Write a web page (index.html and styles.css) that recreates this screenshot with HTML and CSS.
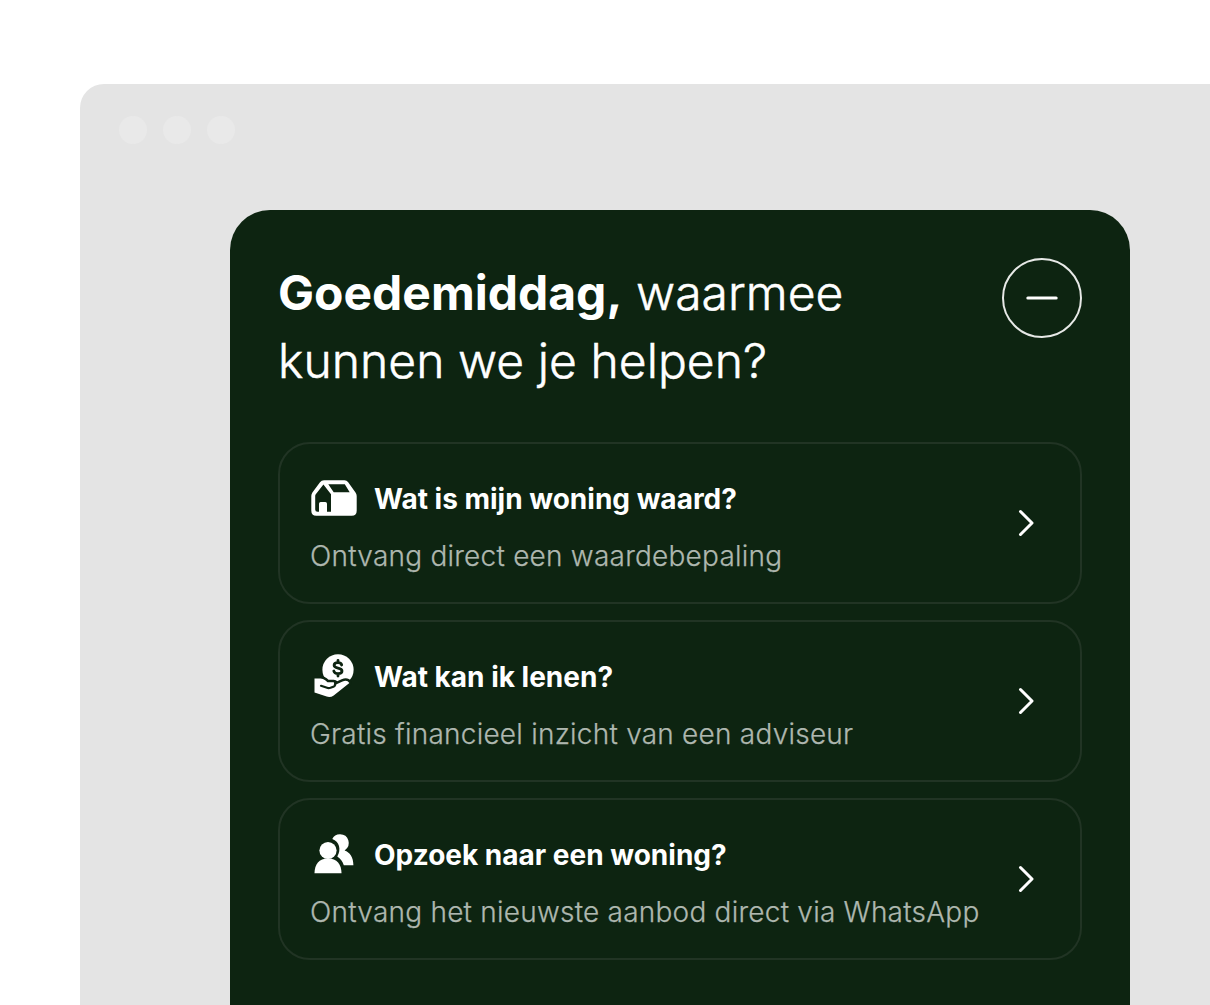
FILE: index.html
```html
<!DOCTYPE html>
<html lang="nl">

<head>
    <meta charset="UTF-8">
    <meta name="viewport" content="width=device-width, initial-scale=1.0">
    <title>Goedemiddag</title>
    <link rel="stylesheet" href="styles.css">
</head>

<body>
    <div class="browser">
        <div class="browser-dots">
            <span></span>
            <span></span>
            <span></span>
        </div>

        <div class="widget">
            <div class="widget-header">
                <h1 class="widget-title"><strong>Goedemiddag,</strong> waarmee<br>kunnen we je helpen?</h1>
                <button type="button" class="minimize-button" aria-label="Minimaliseren">
                    <svg width="32" height="4" viewBox="0 0 32 4">
                        <path d="M1.8 2h28.4" stroke="#fff" stroke-width="3" stroke-linecap="round" />
                    </svg>
                </button>
            </div>

            <div class="options">
                <!-- Waardebepaling -->
                <a class="option" href="#">
                    <div class="option-text">
                        <div class="option-heading">
                            <svg class="option-icon" viewBox="0 0 48 48">
                                <path fill="#fff" fill-rule="evenodd" d="M14 6.3H34.5Q36.7 6.3 38 8L45.5 18.5Q46.7 20 46.7 22V36.7Q46.7 41.7 41.7 41.7H6.3Q1.3 41.7 1.3 36.7V22Q1.3 20 2.4 18.4L10 8.3Q11.5 6.3 14 6.3ZM13.4 10.6L5.8 20.2Q5.2 21 5.2 22V35.5Q5.2 37.8 7.5 37.8H9V29.7Q9 28 10.7 28H15.3Q17 28 17 29.7V37.8H21V20.3ZM18.3 10.3L23.7 18.3H39.7L34.8 10.3Z" />
                            </svg>
                            <h2>Wat is mijn woning waard?</h2>
                        </div>
                        <p>Ontvang direct een waardebepaling</p>
                    </div>
                    <svg class="chevron" viewBox="0 0 16 28">
                        <path d="M2.5 2.5L14 14L2.5 25.5" />
                    </svg>
                </a>

                <!-- Hypotheek -->
                <a class="option" href="#">
                    <div class="option-text">
                        <div class="option-heading">
                            <svg class="option-icon" viewBox="0 0 48 48">
                                <circle cx="28" cy="17.8" r="15.6" fill="#fff" />
                                <path class="icon-line" d="M31.7 13C31.2 11.3 29.9 10.7 28 10.7C25.6 10.7 24.1 11.7 24.1 13.3C24.1 17.2 32 14.9 32 18.9C32 20.6 30.4 21.6 28 21.6C25.7 21.6 24.2 20.7 23.8 19M28 8.3V10.7M28 21.6V24" />
                                <path fill="#fff" stroke="#0d2411" stroke-width="5" paint-order="stroke" stroke-linejoin="round" d="M4.5 26.5H10.5Q13 26.5 15.2 28.3L17.5 30.2H23.5Q26 30.4 26 32.6L32.6 29.6Q37 27.6 39.4 31L23.7 43.4Q20.5 45.8 16.7 44.6L4.5 40.5Z" />
                                <path class="icon-line thin" d="M11 33.8L17.8 36Q19 36.3 20.5 35.8L24 34.4Q25.8 33.4 25 30" />
                            </svg>
                            <h2>Wat kan ik lenen?</h2>
                        </div>
                        <p>Gratis financieel inzicht van een adviseur</p>
                    </div>
                    <svg class="chevron" viewBox="0 0 16 28">
                        <path d="M2.5 2.5L14 14L2.5 25.5" />
                    </svg>
                </a>

                <!-- Woning zoeken -->
                <a class="option" href="#">
                    <div class="option-text">
                        <div class="option-heading">
                            <svg class="option-icon" viewBox="0 0 48 48">
                                <path fill="#fff" d="M22.3 9C23.5 6.2 26.4 4.3 30 4.3A8.7 8.7 0 0 1 34.6 20.4C39.8 22.2 43.4 27 43.4 35.3H33.8C32.6 31.5 30.5 28.6 27.3 26.5C31.5 19.5 29.3 11.5 22.3 9Z" />
                                <circle cx="18" cy="20.5" r="8.6" fill="#fff" />
                                <path fill="#fff" d="M4.5 43.3C4.5 34.5 9 28.5 18 28.5S31.5 34.5 31.5 43.3Z" />
                            </svg>
                            <h2>Opzoek naar een woning?</h2>
                        </div>
                        <p>Ontvang het nieuwste aanbod direct via WhatsApp</p>
                    </div>
                    <svg class="chevron" viewBox="0 0 16 28">
                        <path d="M2.5 2.5L14 14L2.5 25.5" />
                    </svg>
                </a>
            </div>
        </div>
    </div>
</body>

</html>
```
FILE: styles.css
```css
* {
    box-sizing: border-box;
}

body {
    font-family: Inter, "Liberation Sans", sans-serif;
    margin: 0;
    padding: 84px 0 0 80px;
    height: 1005px;
    background-color: #fff;
    overflow: hidden;
}

h1,
h2,
p {
    margin: 0;
}

.browser {
    height: 921px;
    padding: 32px 80px 0 39px;
    background-color: #e4e4e4;
    border-top-left-radius: 24px;
}

.browser-dots {
    display: flex;
    gap: 16px;
}

.browser-dots span {
    width: 28px;
    height: 28px;
    border-radius: 50%;
    background-color: #e9e9e9;
}

/* Widget */
.widget {
    width: 900px;
    height: 795px;
    margin: 66px 0 0 111px;
    padding: 48px 48px 0;
    background-color: #0d2411;
    border-radius: 40px 40px 0 0;
    color: #fff;
}

.widget-header {
    display: flex;
    justify-content: space-between;
    align-items: flex-start;
    height: 184px;
}

.widget-title {
    padding-top: 1px;
    font-size: 48px;
    font-weight: 300;
    line-height: 68px;
    letter-spacing: 0.05px;
    -webkit-text-stroke: 0.5px #fff;
}

.widget-title strong {
    font-weight: 700;
    letter-spacing: 0;
    -webkit-text-stroke: 0;
}

.minimize-button {
    display: flex;
    align-items: center;
    justify-content: center;
    width: 80px;
    height: 80px;
    padding: 0;
    background: none;
    border: 2px solid #e7e9e7;
    border-radius: 50%;
    cursor: pointer;
}

/* Options */
.options {
    display: flex;
    flex-direction: column;
    gap: 16px;
}

.option {
    display: flex;
    align-items: center;
    justify-content: space-between;
    height: 162px;
    padding: 0 46px 0 30px;
    border: 2px solid #213424;
    border-radius: 32px;
    color: #fff;
    text-decoration: none;
}

.option-text {
    padding-top: 4px;
}

.option-heading {
    display: flex;
    align-items: center;
    gap: 16px;
    height: 48px;
    margin-bottom: 14px;
}

.option-heading h2 {
    padding-top: 2px;
    font-size: 28px;
    font-weight: 700;
    line-height: 40px;
}

.option p {
    font-size: 28px;
    font-weight: 300;
    line-height: 40px;
    letter-spacing: 0.23px;
    color: #aeb7af;
    -webkit-text-stroke: 0.25px #aeb7af;
    white-space: nowrap;
}

.option-icon {
    width: 48px;
    height: 48px;
}

.icon-line {
    fill: none;
    stroke: #0d2411;
    stroke-width: 2.8;
    stroke-linecap: round;
}

.icon-line.thin {
    stroke-width: 2.2;
}

.chevron {
    width: 16px;
    height: 28px;
    flex-shrink: 0;
}

.chevron path {
    fill: none;
    stroke: #fff;
    stroke-width: 3;
    stroke-linecap: round;
    stroke-linejoin: round;
}
```
